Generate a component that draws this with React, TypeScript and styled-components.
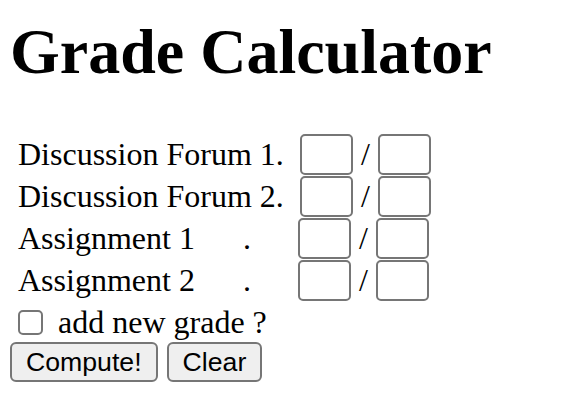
import styled, { createGlobalStyle } from 'styled-components';

const GlobalStyle = createGlobalStyle`
  body {
    margin: 0;
    background: #ffffff;
    color: #000000;
    font-family: 'Liberation Serif', 'Times New Roman', serif;
  }
`;

const Page = styled.div`
  padding: 16px 10px 0 10px;
`;

const Title = styled.h1`
  margin: 0 0 45px 0;
  font-size: 64px;
  font-weight: 700;
  line-height: 72px;
`;

const Form = styled.form`
  display: flex;
  flex-direction: column;
`;

const Row = styled.div`
  display: flex;
  align-items: center;
  height: 42px;
  padding-left: 8px;
`;

const Label = styled.span<{ $width: number }>`
  width: ${(p) => p.$width}px;
  font-size: 32px;
  white-space: pre;
`;

const ScoreInput = styled.input`
  box-sizing: border-box;
  width: 53px;
  height: 41px;
  margin: 0;
  border: 2px solid #767676;
  border-radius: 5px;
  background: #ffffff;
  font-size: 26px;
`;

const Slash = styled.span`
  width: 25px;
  text-align: center;
  font-size: 32px;
`;

const CheckRow = styled.label`
  display: flex;
  align-items: center;
  height: 40px;
  padding-top: 2px;
  box-sizing: border-box;
  font-size: 32px;
`;

const Check = styled.input`
  box-sizing: border-box;
  appearance: none;
  width: 25px;
  height: 25px;
  margin: 0 15px 0 8px;
  border: 2px solid #767676;
  border-radius: 5px;
  background: #ffffff;
`;

const Buttons = styled.div`
  display: flex;
  gap: 9px;
  margin-top: 1px;
`;

const Button = styled.button`
  box-sizing: border-box;
  height: 40px;
  padding: 0 14px;
  border: 2px solid #767676;
  border-radius: 6px;
  background: #efefef;
  color: #000000;
  font-family: 'Liberation Sans', Arial, sans-serif;
  font-size: 26.67px;
`;

const rows = [
  { label: 'Discussion Forum 1.', width: 282 },
  { label: 'Discussion Forum 2.', width: 282 },
  { label: 'Assignment 1      .', width: 280 },
  { label: 'Assignment 2      .', width: 280 },
];

export default function App() {
  return (
    <>
      <GlobalStyle />
      <Page>
        <Title>Grade Calculator</Title>
        <Form onSubmit={(e) => e.preventDefault()}>
          {rows.map((r) => (
            <Row key={r.label}>
              <Label $width={r.width}>{r.label}</Label>
              <ScoreInput type="text" />
              <Slash>/</Slash>
              <ScoreInput type="text" />
            </Row>
          ))}
          <CheckRow>
            <Check type="checkbox" />
            add new grade ?
          </CheckRow>
          <Buttons>
            <Button type="button">Compute!</Button>
            <Button type="button">Clear</Button>
          </Buttons>
        </Form>
      </Page>
    </>
  );
}
